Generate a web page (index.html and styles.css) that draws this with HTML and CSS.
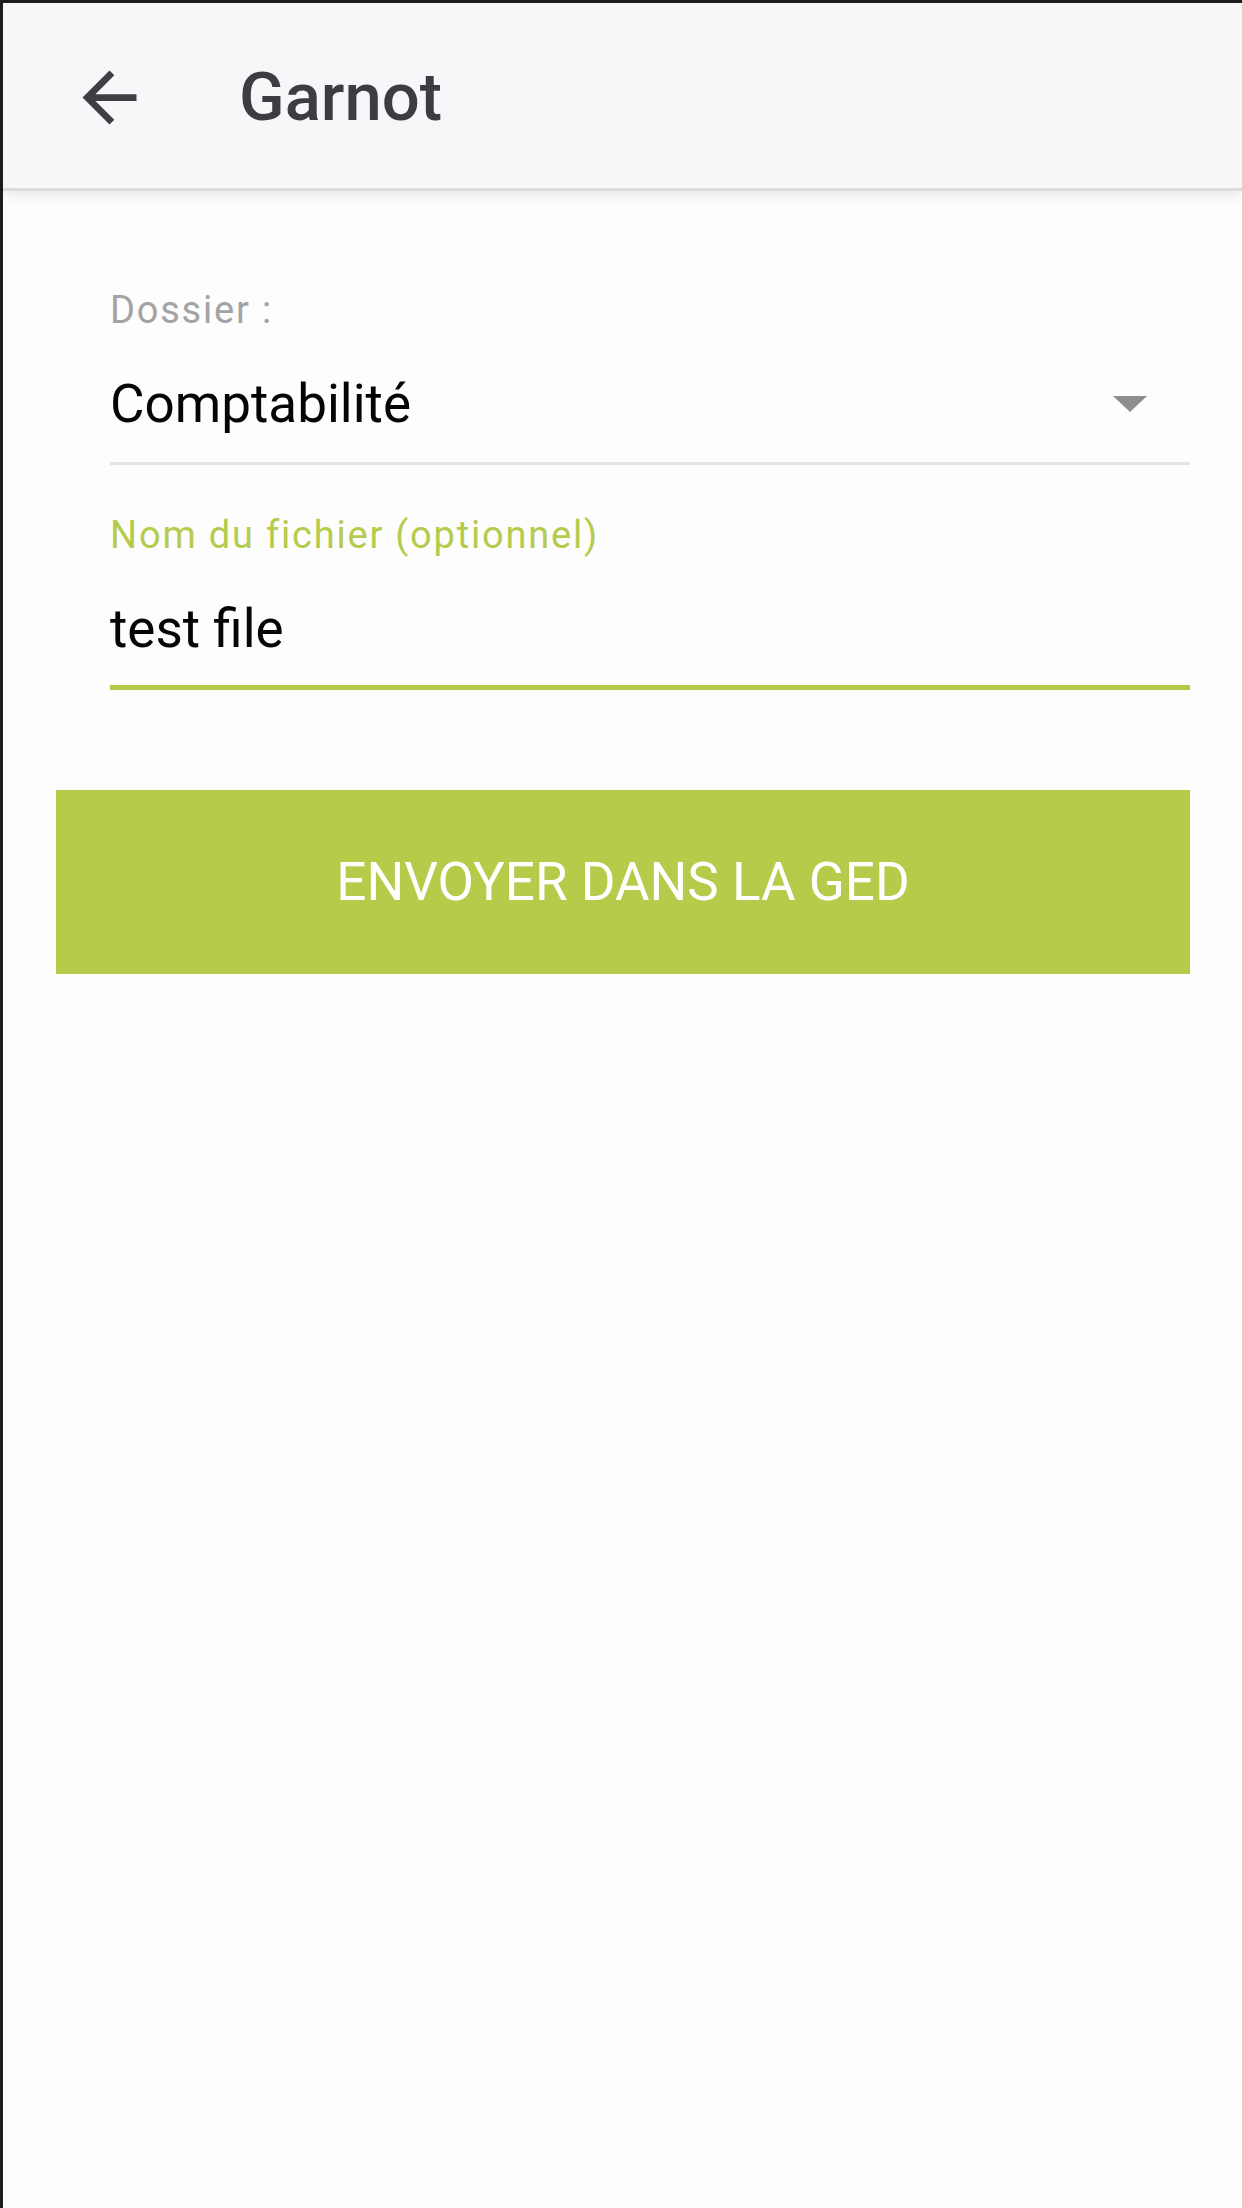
FILE: index.html
```html
<!DOCTYPE html>
<html lang="fr">
<head>
    <meta charset="UTF-8">
    <meta name="viewport" content="width=device-width, initial-scale=1.0">
    <title>Garnot</title>
    <link rel="stylesheet" href="styles.css">
</head>
<body>

    <!-- Top bar -->
    <header class="toolbar">
        <button class="back-btn" aria-label="Retour">
            <svg viewBox="0 0 24 24" width="81" height="81">
                <path d="M20 11H7.83l5.59-5.59L12 4l-8 8 8 8 1.41-1.41L7.83 13H20v-2z" fill="currentColor"/>
            </svg>
        </button>
        <h1 class="title">Garnot</h1>
    </header>

    <main class="content">
        <!-- Folder select -->
        <div class="field">
            <label class="field-label">Dossier :</label>
            <div class="select-row">
                <span class="select-value">Comptabilité</span>
                <span class="select-arrow"></span>
            </div>
        </div>

        <!-- File name -->
        <div class="field">
            <label class="field-label active" for="filename">Nom du fichier (optionnel)</label>
            <input type="text" id="filename" class="text-input" value="test file">
        </div>

        <button class="btn-send">ENVOYER DANS LA GED</button>
    </main>

</body>
</html>
```

FILE: styles.css
```css
* {
    box-sizing: border-box;
}

html, body {
    margin: 0;
    padding: 0;
}

body {
    font-family: Roboto, "Noto Sans", sans-serif;
    background: #fdfdfd;
    min-height: 100vh;
    border-top: 3px solid #1d1d1f;
    border-left: 3px solid #1d1d1f;
}

.toolbar {
    height: 185px;
    padding-top: 4px;
    background: #f7f6f9;
    display: flex;
    align-items: center;
    position: relative;
    box-shadow: 0 3px 0 #dcdcdf, 0 6px 12px rgba(0, 0, 0, 0.1);
}

.back-btn {
    border: none;
    background: none;
    padding: 0;
    margin-left: 66px;
    width: 81px;
    height: 81px;
    color: #3f3e43;
    display: flex;
}

.title {
    margin: 0 0 0 89px;
    font-size: 67px;
    font-weight: 500;
    line-height: 1;
    color: #3d3c41;
}

.content {
    padding: 0 52px 0 53px;
}

.field {
    margin-left: 54px;
}

.field:first-child {
    padding-top: 99px;
}

.field + .field {
    margin-top: 47px;
}

.field-label {
    display: block;
    font-size: 38px;
    line-height: 46px;
    letter-spacing: 1.8px;
    color: #a3a3a6;
}

.field-label.active {
    color: #b4cb4e;
}

.select-row {
    display: flex;
    align-items: center;
    justify-content: space-between;
    margin-top: 40px;
    padding-bottom: 27px;
    border-bottom: 3px solid #e4e4e7;
}

.select-value {
    font-size: 53px;
    line-height: 62px;
    color: #050505;
}

.select-arrow {
    width: 0;
    height: 0;
    margin-right: 43px;
    border-left: 17px solid transparent;
    border-right: 17px solid transparent;
    border-top: 16px solid #8e8e90;
}

.text-input {
    display: block;
    width: 100%;
    margin-top: 40px;
    padding: 0 0 25px;
    border: none;
    border-bottom: 5px solid #b3ca48;
    background: transparent;
    font-family: inherit;
    font-size: 53px;
    line-height: 62px;
    height: 92px;
    color: #050505;
    outline: none;
}

.btn-send {
    display: block;
    width: 100%;
    height: 184px;
    margin-top: 100px;
    border: none;
    background: #b5cc4a;
    color: #ffffff;
    font-family: inherit;
    font-size: 53px;
    line-height: 184px;
    padding: 0;
    cursor: pointer;
}
```
